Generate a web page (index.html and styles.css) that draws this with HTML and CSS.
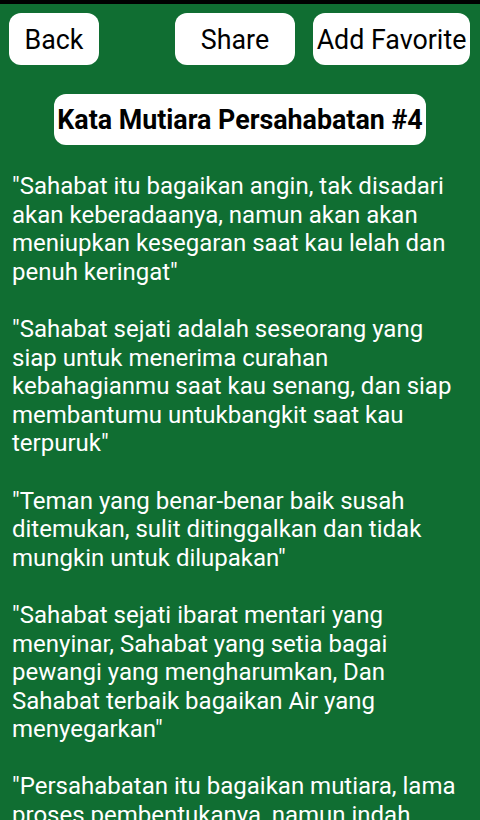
FILE: index.html
```html
<!DOCTYPE html>
<html>
<head>
<meta charset="utf-8">
<link rel="stylesheet" href="styles.css">
</head>
<body>
<div class="statusbar"></div>
<div class="screen">
  <div class="toolbar">
    <div class="btn btn-back">Back</div>
    <div class="spacer"></div>
    <div class="btn btn-share">Share</div>
    <div class="btn btn-fav">Add Favorite</div>
  </div>
  <div class="title-row">
    <div class="title">Kata Mutiara Persahabatan #4</div>
  </div>
  <div class="content">"Sahabat itu bagaikan angin, tak disadari akan keberadaanya, namun akan akan meniupkan kesegaran saat kau lelah dan penuh keringat"

"Sahabat sejati adalah seseorang yang siap untuk menerima curahan kebahagianmu saat kau senang, dan siap membantumu untukbangkit saat kau terpuruk"

"Teman yang benar-benar baik susah ditemukan, sulit ditinggalkan dan tidak mungkin untuk dilupakan"

"Sahabat sejati ibarat mentari yang menyinar, Sahabat yang setia bagai pewangi yang mengharumkan, Dan Sahabat terbaik bagaikan Air yang menyegarkan"

"Persahabatan itu bagaikan mutiara, lama proses pembentukanya, namun indah hasilnya dan sangat berharga"</div>
</div>
</body>
</html>
```

FILE: styles.css
```css
html, body {
  margin: 0;
  padding: 0;
  height: 100%;
  overflow: hidden;
}
body {
  background: #106e32;
  font-family: Roboto, "Noto Sans", sans-serif;
}
.statusbar {
  height: 4px;
  background: #000;
}
.screen {
  display: flex;
  flex-direction: column;
}
.toolbar {
  display: flex;
  align-items: center;
  padding: 9px 10px 0 9px;
  gap: 18px;
}
.spacer {
  flex: 1;
}
.btn {
  background: #fff;
  color: #000;
  height: 52px;
  padding-top: 2px;
  border-radius: 12px;
  display: flex;
  align-items: center;
  justify-content: center;
  font-size: 26.8px;
  box-sizing: border-box;
  white-space: nowrap;
}
.btn-back {
  width: 90px;
}
.btn-share {
  width: 120px;
}
.btn-fav {
  width: 157px;
}
.title-row {
  display: flex;
  justify-content: center;
  padding-top: 29px;
}
.title {
  background: #fff;
  color: #000;
  font-weight: bold;
  font-size: 26.8px;
  height: 51px;
  padding: 0 3px;
  border-radius: 12px;
  display: flex;
  align-items: center;
  white-space: nowrap;
}
.content {
  color: #fff;
  font-size: 24px;
  line-height: 28.6px;
  white-space: pre-wrap;
  padding: 27px 12px 0 12px;
}
```
